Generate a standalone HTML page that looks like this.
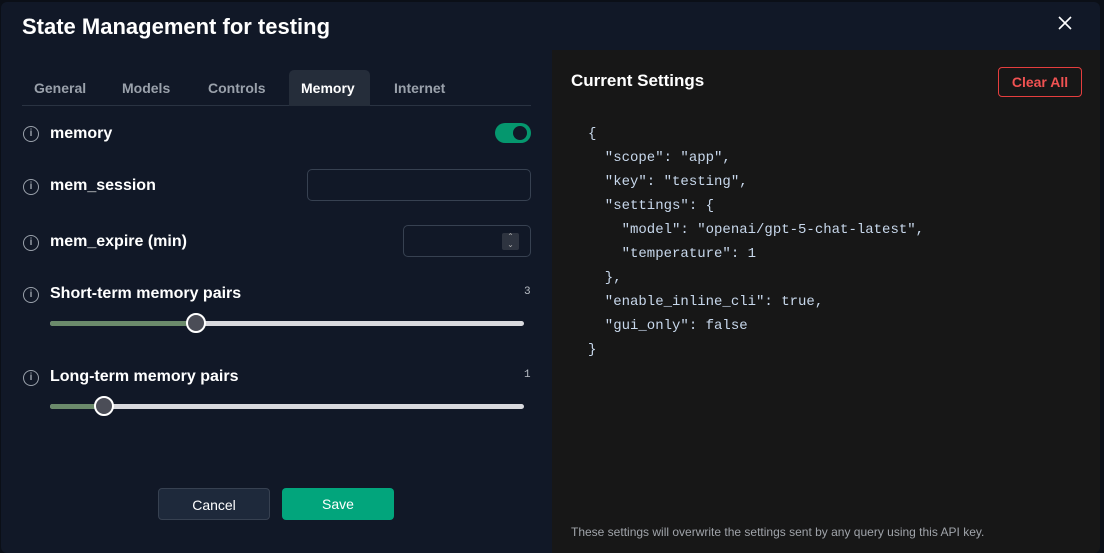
<!DOCTYPE html>
<html><head><meta charset="utf-8"><style>
*{box-sizing:border-box;margin:0;padding:0}
body{width:1104px;height:551px;background:#0b0f17;font-family:"Liberation Sans",sans-serif;position:relative;overflow:hidden}
.modal{position:absolute;left:1px;top:2px;width:1099px;height:551px;background:#111827;border-radius:6px;overflow:hidden}
.title{position:absolute;left:21px;top:12px;color:#fff;font-size:22px;font-weight:bold}
.close{position:absolute;left:1055px;top:12px}
.tabs{position:absolute;left:21px;top:68px;width:509px;height:36px;border-bottom:1px solid #2a3342}
.tab{position:absolute;top:0;height:36px;line-height:37px;font-size:14px;font-weight:bold;color:#9aa1ab}
.tab.act{background:#252d3a;color:#fff;border-radius:5px 5px 0 0;padding:0 12px}
.row{position:absolute;left:22px;color:#fff;font-size:16px;font-weight:bold}
.info{position:absolute;left:22px;width:16px;height:16px;border:1.5px solid #9aa1ab;border-radius:50%;color:#9aa1ab;font-size:10px;text-align:center;line-height:13px;font-weight:bold}
.lab{position:absolute;left:49px;color:#fff;font-size:16px}
.inp{position:absolute;border:1px solid #374151;border-radius:5px;background:#111827}
.track{position:absolute;left:49px;width:474px;height:5px;background:#d9d9de;border-radius:3px}
.fill{position:absolute;left:0;top:0;height:5px;background:#6b8a6b;border-radius:3px}
.knob{position:absolute;top:-8px;width:20px;height:20px;border-radius:50%;background:#4b4d57;border:2px solid #fff}
.num{position:absolute;left:523px;color:#b9bec6;font-size:11px;font-family:"Liberation Mono",monospace}
.btn{position:absolute;top:486px;width:112px;height:32px;border-radius:4px;color:#fff;font-size:14px;text-align:center;line-height:32px}
.right{position:absolute;left:551px;top:48px;width:548px;height:503px;background:#171717}
pre{position:absolute;left:36px;top:72px;font-family:"Liberation Mono",monospace;font-size:14px;line-height:24px;color:#c8d8ec}
</style></head><body>
<div class="modal">
<div class="title">State Management for testing</div>
<svg class="close" width="18" height="18" viewBox="0 0 18 18"><path d="M3 3L15 15M15 3L3 15" stroke="#fff" stroke-width="1.6"/></svg>
<div class="tabs">
<div class="tab" style="left:12px">General</div>
<div class="tab" style="left:100px">Models</div>
<div class="tab" style="left:186px">Controls</div>
<div class="tab act" style="left:267px;width:81px">Memory</div>
<div class="tab" style="left:372px">Internet</div>
</div>
<div class="info" style="top:124px">i</div><div class="lab" style="top:123px;font-weight:bold">memory</div>
<div style="position:absolute;left:494px;top:121px;width:36px;height:20px;border-radius:10px;background:#05976e"><div style="position:absolute;left:18px;top:3px;width:14px;height:14px;border-radius:50%;background:#111827"></div></div>
<div class="info" style="top:177px">i</div><div class="lab" style="top:175px;font-weight:bold">mem_session</div>
<div class="inp" style="left:306px;top:167px;width:224px;height:32px"></div>
<div class="info" style="top:233px">i</div><div class="lab" style="top:231px;font-weight:bold">mem_expire (min)</div>
<div class="inp" style="left:402px;top:223px;width:128px;height:32px"><div style="position:absolute;left:98px;top:7px;width:17px;height:17px;background:#2e3440;border-radius:2px;color:#aaa;font-size:8px;text-align:center;line-height:8px">⌃<br>⌄</div></div>
<div class="info" style="top:285px">i</div><div class="lab" style="top:283px;font-weight:bold">Short-term memory pairs</div>
<div class="num" style="top:284px">3</div>
<div class="track" style="top:319px"><div class="fill" style="width:146px"></div><div class="knob" style="left:136px"></div></div>
<div class="info" style="top:368px">i</div><div class="lab" style="top:366px;font-weight:bold">Long-term memory pairs</div>
<div class="num" style="top:367px">1</div>
<div class="track" style="top:402px"><div class="fill" style="width:55px"></div><div class="knob" style="left:44px"></div></div>
<div class="btn" style="left:157px;background:#1e293b;border:1px solid #374151">Cancel</div>
<div class="btn" style="left:281px;background:#02a57c">Save</div>
<div class="right">
<div style="position:absolute;left:19px;top:21px;color:#fff;font-size:17px;font-weight:bold">Current Settings</div>
<div style="position:absolute;left:446px;top:17px;width:84px;height:30px;border:1px solid #e53e3e;border-radius:4px;color:#f05252;font-size:14px;font-weight:bold;text-align:center;line-height:28px">Clear All</div>
<pre>{
  "scope": "app",
  "key": "testing",
  "settings": {
    "model": "openai/gpt-5-chat-latest",
    "temperature": 1
  },
  "enable_inline_cli": true,
  "gui_only": false
}</pre>
<div style="position:absolute;left:19px;top:475px;color:#a0a4aa;font-size:12px">These settings will overwrite the settings sent by any query using this API key.</div>
</div>
</div>
</body></html>
